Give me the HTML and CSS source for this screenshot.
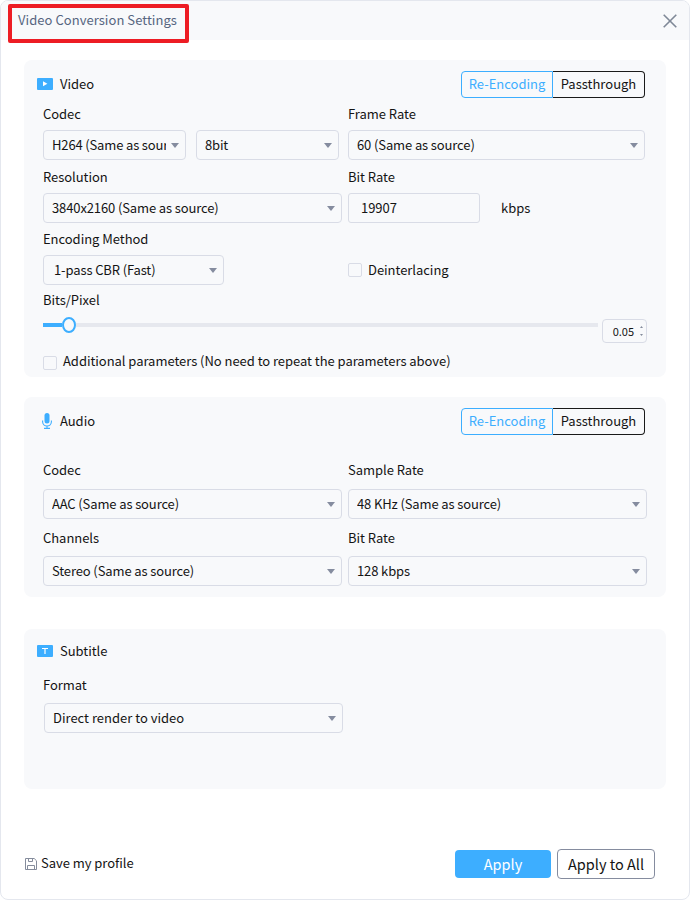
FILE: index.html
```html
<!DOCTYPE html>
<html lang="en">
<head>
  <meta charset="UTF-8">
  <meta name="viewport" content="width=device-width, initial-scale=1.0">
  <title>Video Conversion Settings</title>
  <link rel="stylesheet" href="styles.css">
</head>
<body>

  <div class="window">
    <!-- Title bar -->
    <div class="titlebar">
      <span class="window-title">Video Conversion Settings</span>
      <span class="highlight"></span>
      <svg class="close" width="14" height="14" viewBox="0 0 14 14"><path d="M.7.7l12.6 12.6M13.3.7L.7 13.3" stroke="#7f8897" stroke-width="1.6" fill="none"/></svg>
    </div>

    <!-- Video -->
    <div class="card video">
      <div class="card-head">
        <svg class="icon" width="16" height="12" viewBox="0 0 16 12"><rect width="16" height="12" rx="1" fill="#3daeff"/><path d="M6 3.3v5l4.4-2.5z" fill="#fff"/></svg>
        <span class="card-title">Video</span>
        <div class="toggle">
          <button class="active">Re-Encoding</button>
          <button>Passthrough</button>
        </div>
      </div>

      <div class="grid">
        <div class="field">
          <label>Codec</label>
          <div class="pair">
            <div class="select"><span>H264 (Same as source)</span></div>
            <div class="select"><span>8bit</span></div>
          </div>
        </div>
        <div class="field">
          <label>Frame Rate</label>
          <div class="select frame-rate"><span>60 (Same as source)</span></div>
        </div>
        <div class="field">
          <label>Resolution</label>
          <div class="select"><span>3840x2160 (Same as source)</span></div>
        </div>
        <div class="field">
          <label>Bit Rate</label>
          <div class="bitrate">
            <div class="textbox">19907</div>
            <span>kbps</span>
          </div>
        </div>
      </div>

      <div class="grid encoding">
        <div class="field">
          <label>Encoding Method</label>
          <div class="select method"><span>1-pass CBR (Fast)</span></div>
        </div>
        <div class="check deinterlacing"><i class="box"></i><span>Deinterlacing</span></div>
      </div>

      <label class="bits-label">Bits/Pixel</label>
      <div class="slider-row">
        <div class="slider">
          <div class="fill"></div>
          <div class="knob"></div>
          <div class="track"></div>
        </div>
        <div class="spin">
          <span>0.05</span>
          <svg width="3" height="10" viewBox="0 0 3 10"><path d="M0 2L1.5 0 3 2zM0 8l1.5 2L3 8z" fill="#858c9c"/></svg>
        </div>
      </div>
      <div class="check params"><i class="box"></i><span>Additional parameters (No need to repeat the parameters above)</span></div>
    </div>

    <!-- Audio -->
    <div class="card audio">
      <div class="card-head">
        <svg class="icon mic" width="10" height="16" viewBox="0 0 10 16"><rect x="2.5" width="5" height="10.5" rx="2.5" fill="#3daeff"/><path d="M.6 7.5v1.3a4.4 4.2 0 0 0 8.8 0V7.5M5 13v2M2 15.4h6" fill="none" stroke="#3daeff" stroke-width="1.1"/></svg>
        <span class="card-title">Audio</span>
        <div class="toggle">
          <button class="active">Re-Encoding</button>
          <button>Passthrough</button>
        </div>
      </div>
      <div class="grid">
        <div class="field">
          <label>Codec</label>
          <div class="select"><span>AAC (Same as source)</span></div>
        </div>
        <div class="field">
          <label>Sample Rate</label>
          <div class="select"><span>48 KHz (Same as source)</span></div>
        </div>
        <div class="field tight">
          <label>Channels</label>
          <div class="select"><span>Stereo (Same as source)</span></div>
        </div>
        <div class="field tight">
          <label>Bit Rate</label>
          <div class="select"><span>128 kbps</span></div>
        </div>
      </div>
    </div>

    <!-- Subtitle -->
    <div class="card subtitle">
      <div class="card-head">
        <svg class="icon" width="16" height="12" viewBox="0 0 16 12"><rect width="16" height="12" rx="1" fill="#3daeff"/><path d="M5 3.5h6M8 3.5V9" stroke="#fff" stroke-width="1.2" fill="none"/></svg>
        <span class="card-title">Subtitle</span>
      </div>
      <div class="field">
        <label>Format</label>
        <div class="select format"><span>Direct render to video</span></div>
      </div>
    </div>

    <!-- Footer -->
    <div class="footer">
      <svg width="12" height="12" viewBox="0 0 12 12" fill="none" stroke="#858c9c"><path d="M.5.5h8.7l2.3 2.3v8.7H.5zM3.5.5v3h4v-3M2.5 11.5v-4h7v4"/></svg>
      <span class="save">Save my profile</span>
      <button class="apply">Apply</button>
      <button class="apply-all">Apply to All</button>
    </div>
  </div>

</body>
</html>
```
FILE: styles.css
```css
* {
  box-sizing: border-box;
}

body {
  margin: 0;
  background-color: #fff;
  font-family: "Noto Sans CJK SC", "Noto Sans", sans-serif;
  font-size: 13px;
  line-height: 20px;
  letter-spacing: -0.04px;
  color: #141414;
}

button {
  font: inherit;
  color: inherit;
  background: none;
  padding: 0;
  white-space: nowrap;
}

svg {
  display: block;
  flex: none;
}

.window {
  width: 690px;
  height: 900px;
  border: 1px solid #e4e7ee;
  border-radius: 8px;
  overflow: hidden;
}

/* Title bar */
.titlebar {
  position: relative;
  display: flex;
  align-items: center;
  justify-content: space-between;
  height: 39px;
  padding: 0 12px 1px 17px;
  background-color: #f8f9fb;
}

.window-title {
  color: #56657f;
  letter-spacing: 0.05px;
}

.close {
  margin-top: 1px;
}

.highlight {
  position: absolute;
  left: 7px;
  top: 3px;
  width: 181px;
  height: 39px;
  border: 4px solid #ed1c24;
  border-radius: 2px;
}

/* Cards */
.card {
  width: 642px;
  margin-left: 23px;
  padding: 11px 0 0 19px;
  border-radius: 8px;
  background-color: #f8f9fb;
}

.video {
  height: 317px;
  margin-top: 20px;
}

.audio {
  height: 200px;
  margin-top: 20px;
}

.subtitle {
  height: 160px;
  margin-top: 32px;
  padding-top: 9px;
}

.card-head {
  display: flex;
  align-items: center;
  height: 27px;
  margin: 0 21px 6px -6px;
}

.audio .card-head {
  margin-bottom: 25px;
}

.subtitle .card-head {
  margin-bottom: 10px;
}

.icon {
  margin-right: 7px;
  margin-bottom: 1px;
}

.card-title {
  margin-bottom: 1px;
}

.mic {
  margin-left: 5px;
  margin-right: 8px;
}

.toggle {
  display: flex;
  margin-left: auto;
}

.toggle button {
  width: 92px;
  height: 27px;
  padding-bottom: 2px;
  border: 1px solid #1a1a1a;
  border-left: 0;
  border-radius: 0 4px 4px 0;
}

.toggle .active {
  color: #3daeff;
  border: 1px solid #3daeff;
  border-radius: 4px 0 0 4px;
}

/* Fields */
.grid {
  display: grid;
  grid-template-columns: 299px 299px;
  gap: 7px 6px;
}

.encoding {
  margin-top: 6px;
}

label {
  display: block;
  height: 20px;
  margin-bottom: 6px;
}

.audio label {
  margin-bottom: 9px;
}

.audio .grid {
  row-gap: 9px;
}

.audio .tight label,
.subtitle label {
  margin-bottom: 8px;
}

.select {
  display: flex;
  align-items: center;
  width: 299px;
  height: 30px;
  padding: 0 6px 0 8px;
  border: 1px solid #d9dce6;
  border-radius: 4px;
  letter-spacing: -0.12px;
}

.select span {
  flex: 1;
  margin-right: 5px;
  overflow: hidden;
  white-space: nowrap;
}

.select::after {
  content: "";
  border: 4px solid transparent;
  border-top: 5px solid #858c9f;
  border-bottom: 0;
}

.pair {
  display: flex;
  gap: 10px;
}

.pair .select {
  width: 143px;
  letter-spacing: -0.15px;
}

.frame-rate {
  width: 297px;
}

.method {
  width: 181px;
  padding-left: 10px;
}

.format {
  margin-left: 1px;
  letter-spacing: 0;
}

.bitrate {
  display: flex;
  align-items: center;
  gap: 21px;
}

.textbox {
  width: 132px;
  height: 30px;
  padding: 4px 12px;
  border: 1px solid #d9dce6;
  border-radius: 3px;
}

/* Checkboxes */
.check {
  display: flex;
  align-items: center;
  gap: 6px;
}

.box {
  width: 14px;
  height: 14px;
  border: 1px solid #d9dce6;
  border-radius: 2px;
}

.deinterlacing {
  align-self: end;
  height: 30px;
}

.params {
  margin-top: 8px;
}

.params .box {
  margin-top: 3px;
}

/* Slider */
.bits-label {
  margin: 5px 0 0;
}

.slider-row {
  display: flex;
  align-items: flex-start;
  gap: 4px;
  height: 33px;
}

.slider {
  display: flex;
  align-items: center;
  width: 555px;
  height: 30px;
}

.fill {
  width: 19px;
  height: 4px;
  background-color: #3daeff;
}

.knob {
  width: 14px;
  height: 16px;
  border: 2px solid #3daeff;
  border-radius: 50%;
}

.track {
  flex: 1;
  height: 4px;
  background-color: #e6e8ee;
}

.spin {
  display: flex;
  align-items: center;
  justify-content: flex-end;
  gap: 6px;
  width: 45px;
  height: 24px;
  margin-top: 9px;
  padding-right: 3px;
  border: 1px solid #d9dce6;
  border-radius: 4px;
  font-size: 11px;
}

.spin span {
  margin-bottom: 1px;
}

/* Footer */
.footer {
  display: flex;
  align-items: center;
  height: 30px;
  margin: 60px 34px 0 24px;
}

.save {
  margin: 0 auto 2px 4px;
}

.apply,
.apply-all {
  font-size: 14.5px;
  padding-bottom: 1px;
  border-radius: 4px;
}

.apply {
  width: 96px;
  height: 28px;
  margin-right: 6px;
  border: 0;
  color: #fff;
  background-color: #3daeff;
}

.apply-all {
  width: 98px;
  height: 30px;
  border: 1px solid #858c9f;
}
```
